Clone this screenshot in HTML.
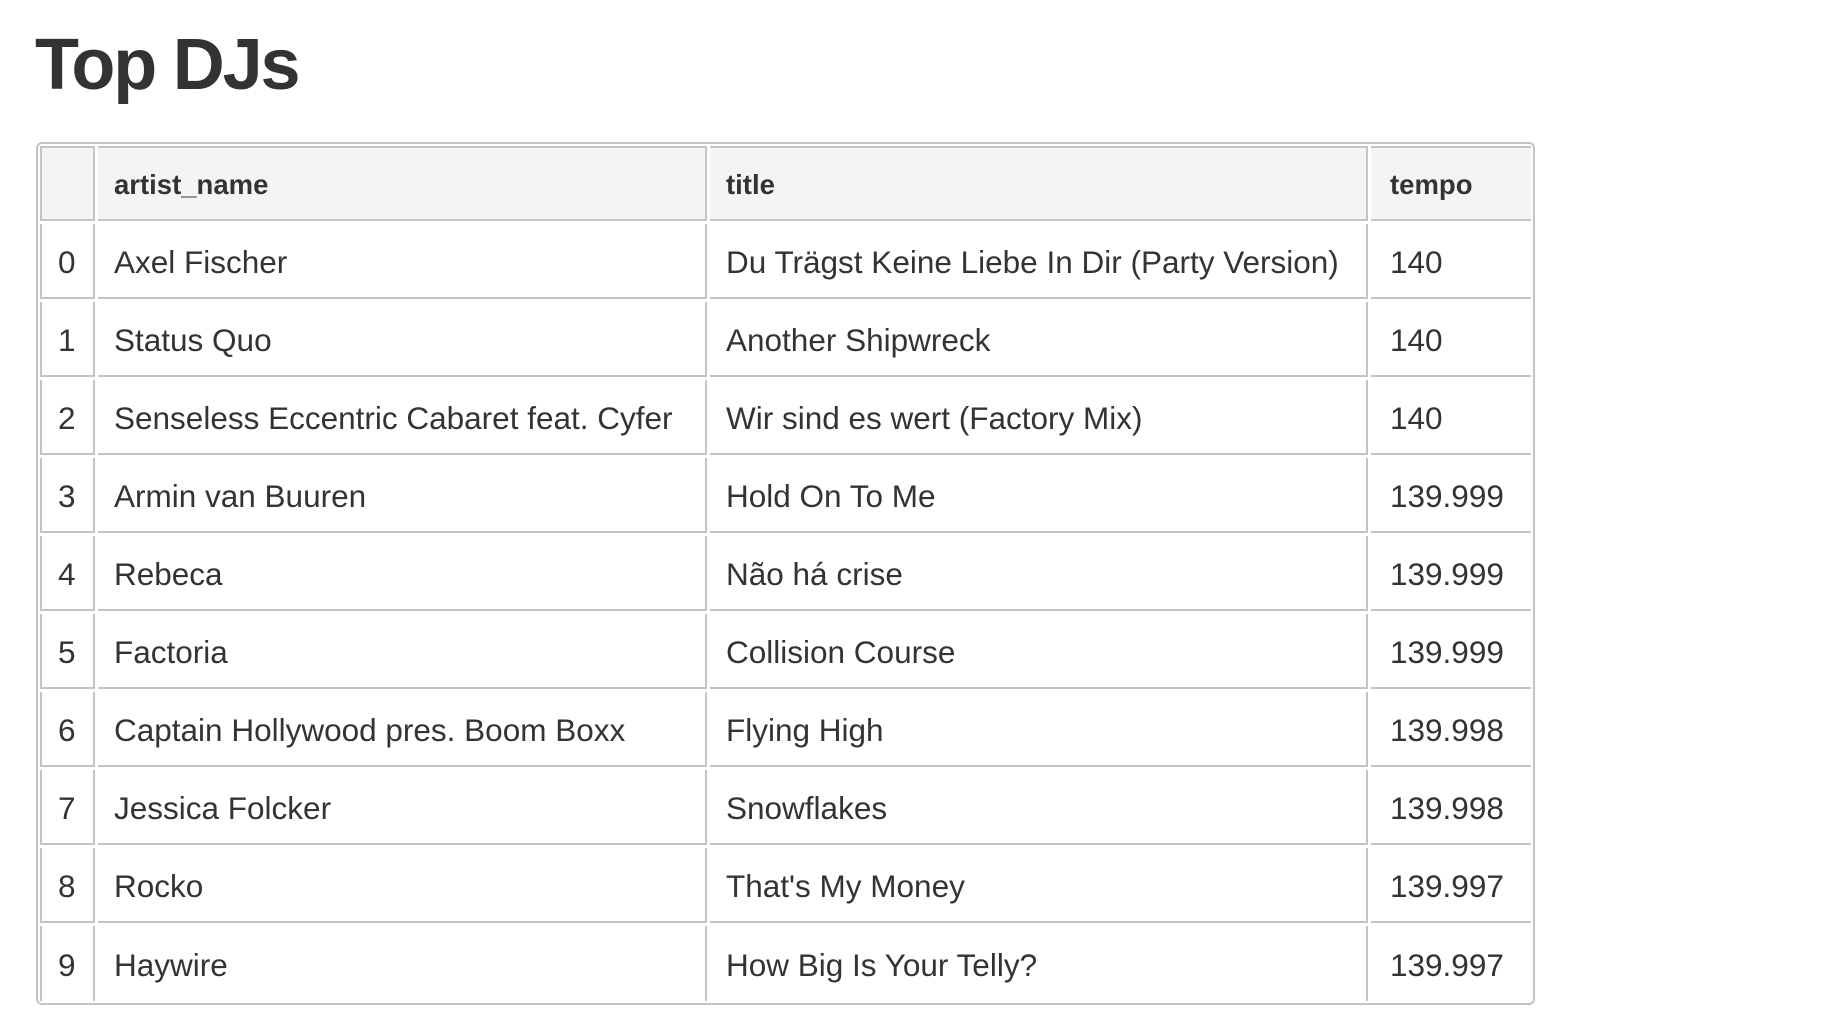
<!DOCTYPE html>
<html><head><meta charset="utf-8"><style>
body{margin:0;background:#fff;width:1824px;height:1020px;overflow:hidden;font-family:"Liberation Sans",sans-serif;color:#333}
h1{position:absolute;left:35px;top:25px;margin:0;font-size:72px;font-weight:bold;letter-spacing:-2.2px;line-height:80px}
.wrap{position:absolute;left:36px;top:142px;border:2px solid #c4c4c4;border-radius:6px}
table{border-collapse:separate;border-spacing:3px;margin:-1px;table-layout:fixed}
td,th{border:0;border-right:2px solid #c4c4c4;border-bottom:2px solid #c4c4c4;height:75px;padding:4px 0 0 16px;text-align:left;font-size:31.5px;box-sizing:border-box;white-space:nowrap;overflow:hidden}
th{background:#f4f4f4;font-size:27.5px;font-weight:bold;border-top:2px solid #c4c4c4;padding-top:2px}
td:first-child,th:first-child{border-left:2px solid #c4c4c4}
td:last-child,th:last-child{border-right:0;padding-left:19px}
tr:last-child td{border-bottom:0}
</style></head><body>
<h1>Top DJs</h1>
<div class="wrap"><table>
<colgroup><col style="width:55px"><col style="width:609px"><col style="width:658px"><col style="width:160px"></colgroup>
<tr><th></th><th>artist_name</th><th>title</th><th>tempo</th></tr>
<tr><td>0</td><td>Axel Fischer</td><td>Du Trägst Keine Liebe In Dir (Party Version)</td><td>140</td></tr>
<tr><td>1</td><td>Status Quo</td><td>Another Shipwreck</td><td>140</td></tr>
<tr><td>2</td><td>Senseless Eccentric Cabaret feat. Cyfer</td><td>Wir sind es wert (Factory Mix)</td><td>140</td></tr>
<tr><td>3</td><td>Armin van Buuren</td><td>Hold On To Me</td><td>139.999</td></tr>
<tr><td>4</td><td>Rebeca</td><td>Não há crise</td><td>139.999</td></tr>
<tr><td>5</td><td>Factoria</td><td>Collision Course</td><td>139.999</td></tr>
<tr><td>6</td><td>Captain Hollywood pres. Boom Boxx</td><td>Flying High</td><td>139.998</td></tr>
<tr><td>7</td><td>Jessica Folcker</td><td>Snowflakes</td><td>139.998</td></tr>
<tr><td>8</td><td>Rocko</td><td>That's My Money</td><td>139.997</td></tr>
<tr><td>9</td><td>Haywire</td><td>How Big Is Your Telly?</td><td>139.997</td></tr>
</table></div>
</body></html>
